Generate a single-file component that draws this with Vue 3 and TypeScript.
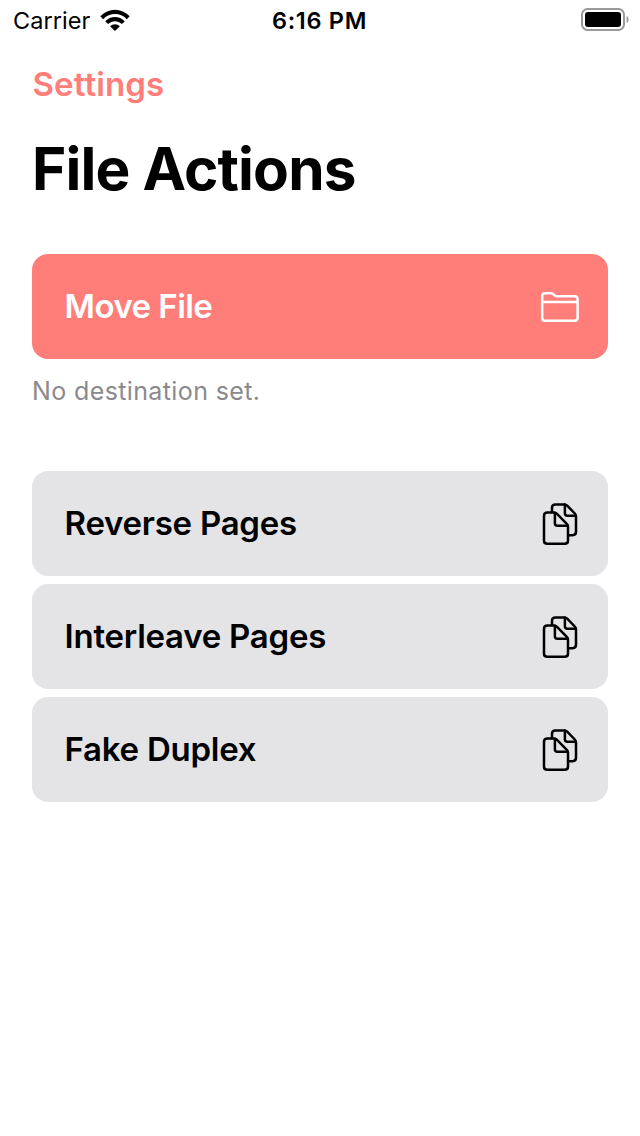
<script setup lang="ts">
interface FileAction {
  id: string
  title: string
}

const pageActions: FileAction[] = [
  { id: 'reverse', title: 'Reverse Pages' },
  { id: 'interleave', title: 'Interleave Pages' },
  { id: 'duplex', title: 'Fake Duplex' },
]
</script>

<template>
  <div class="screen">
    <header class="status">
      <div class="carrier">
        <span class="carrier-name">Carrier</span>
        <svg class="wifi" width="30" height="22" viewBox="0 0 30 22">
          <path d="M0.3 7.3C8.3-1.5 21.7-1.5 29.7 7.3L26.8 10.2C20.3 3.4 9.7 3.4 3.2 10.2Z" />
          <path d="M5.2 12.2C10.7 6.5 19.3 6.5 24.8 12.2L21.9 15.1C18.1 11.2 11.9 11.2 8.1 15.1Z" />
          <path d="M10.1 17.2C12.9 14.5 17.1 14.5 19.9 17.2L15.6 21.5Q15 22 14.4 21.5Z" />
        </svg>
      </div>
      <span class="time">6:16 PM</span>
      <svg class="battery" width="48" height="24" viewBox="0 0 48 24">
        <rect x="1" y="1" width="42" height="21" rx="5.5" fill="none" stroke="#999" stroke-width="2" />
        <rect x="4" y="4" width="36" height="15" rx="3" />
        <path d="M45.6 7.7Q47.6 9 47.6 11.5T45.6 15.3Z" fill="#999" />
      </svg>
    </header>

    <main class="content">
      <a class="settings">Settings</a>
      <h1 class="title">File Actions</h1>

      <button class="action primary" type="button">
        <span class="label move">Move File</span>
        <svg class="icon" width="40" height="44" viewBox="540 285 40 44">
          <path d="M542.2 318V296.2Q542.2 293.3 545.1 293.3H550.7Q552.3 293.3 553.5 294.4L554.6 295.3Q555.7 296.3 557.3 296.3H574.6Q577.6 296.3 577.6 299.3V317.8Q577.6 320.8 574.6 320.8H545.2Q542.2 320.8 542.2 318ZM542.2 302H577.6" />
        </svg>
      </button>
      <p class="note">No destination set.</p>

      <section class="group">
        <button v-for="action in pageActions" :key="action.id" class="action" type="button">
          <span class="label">{{ action.title }}</span>
          <svg class="icon" width="40" height="44" viewBox="540 502 40 44">
            <path d="M552 512V507.8Q552 504.4 555.4 504.4H564.3Q566 504.4 567.2 505.6L574.8 513.5Q576 514.8 576 516.5V531.8Q576 535.2 572.6 535.2H569" />
            <path d="M564.9 504.6V513.3Q564.9 515.8 567.4 515.8H575.8" />
            <path d="M547.4 512.5H553.9Q555.6 512.5 556.8 513.7L566.8 523.8Q568 525 568 526.7V540.4Q568 543.8 564.6 543.8H547.4Q544 543.8 544 540.4V515.9Q544 512.5 547.4 512.5Z" />
            <path d="M554.9 512.7V523.3Q554.9 525.8 557.4 525.8H567.8" />
          </svg>
        </button>
      </section>
    </main>
  </div>
</template>

<style>
body {
  margin: 0;
  background: #fff;
}
</style>

<style scoped>
.screen {
  width: 640px;
  height: 1136px;
  overflow: hidden;
  background: #fff;
  color: #000;
  font-family: Inter, "Liberation Sans", sans-serif;
}
.status {
  box-sizing: border-box;
  height: 40px;
  padding: 0 11px 0 13px;
  display: grid;
  grid-template-columns: 1fr auto 1fr;
  align-items: center;
  font-size: 23.5px;
  line-height: 40px;
  white-space: nowrap;
}
.carrier {
  display: flex;
  align-items: center;
  gap: 10px;
}
.carrier-name {
  padding-top: 2px;
  line-height: 38px;
  letter-spacing: 0.05px;
}
.time {
  padding: 2px 3px 0 0;
  line-height: 38px;
  font-weight: 570;
  letter-spacing: 0.7px;
}
.battery {
  justify-self: end;
}
.content {
  display: flex;
  flex-direction: column;
  padding: 24px 32px 0;
}
.settings {
  height: 40px;
  padding-left: 0.5px;
  color: #ff7e79;
  font-size: 33px;
  font-weight: 600;
  line-height: 40px;
  letter-spacing: 0.1px;
}
.title {
  margin: 29px 0 0;
  height: 72px;
  font-size: 58.5px;
  font-weight: 700;
  line-height: 72px;
  letter-spacing: -0.85px;
}
.action {
  box-sizing: border-box;
  width: 100%;
  height: 105px;
  padding: 0 28px 0 32.6px;
  border: 0;
  border-radius: 16px;
  display: flex;
  align-items: center;
  justify-content: space-between;
  background: #e4e4e6;
  color: #000;
  font-family: inherit;
  font-size: 33px;
  font-weight: 600;
}
.label {
  padding-bottom: 2px;
  line-height: 40px;
  letter-spacing: -0.25px;
}
.move {
  letter-spacing: -0.55px;
}
.primary {
  margin-top: 49px;
  background: #ff7e79;
  color: #fff;
}
.icon {
  fill: none;
  stroke: currentColor;
  stroke-width: 2.5;
  stroke-linejoin: round;
  stroke-linecap: round;
}
.note {
  margin: 16px 0 0;
  height: 32px;
  color: #8a8a8e;
  font-size: 25px;
  line-height: 32px;
  letter-spacing: 0.38px;
}
.group {
  margin-top: 64px;
  display: flex;
  flex-direction: column;
  gap: 8px;
}
</style>
